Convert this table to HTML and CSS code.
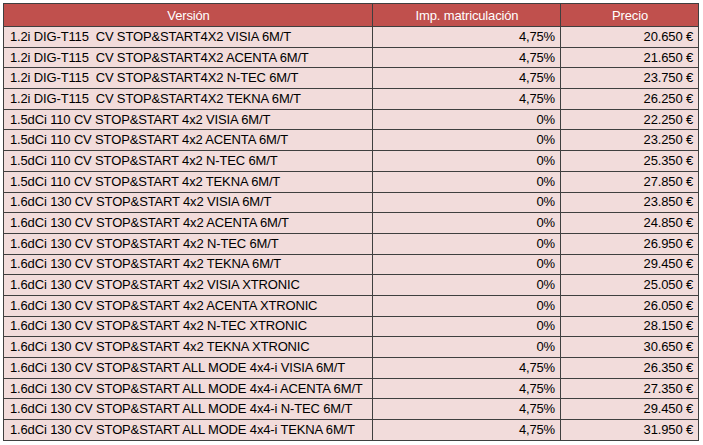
FILE: index.html
```html
<!DOCTYPE html>
<html lang="es">
<head>
<meta charset="utf-8">
<title>Precios</title>
<link rel="stylesheet" href="styles.css">
</head>
<body>
<table class="prices">
  <colgroup>
    <col class="c-version">
    <col class="c-imp">
    <col class="c-price">
  </colgroup>
  <thead>
    <tr><th>Versión</th><th>Imp. matriculación</th><th>Precio</th></tr>
  </thead>
  <tbody>
    <tr><td>1.2i DIG-T115&nbsp; CV STOP&amp;START4X2 VISIA 6M/T</td><td class="num">4,75%</td><td class="num">20.650 €</td></tr>
    <tr><td>1.2i DIG-T115&nbsp; CV STOP&amp;START4X2 ACENTA 6M/T</td><td class="num">4,75%</td><td class="num">21.650 €</td></tr>
    <tr><td>1.2i DIG-T115&nbsp; CV STOP&amp;START4X2 N-TEC 6M/T</td><td class="num">4,75%</td><td class="num">23.750 €</td></tr>
    <tr><td>1.2i DIG-T115&nbsp; CV STOP&amp;START4X2 TEKNA 6M/T</td><td class="num">4,75%</td><td class="num">26.250 €</td></tr>
    <tr><td>1.5dCi 110 CV STOP&amp;START 4x2 VISIA 6M/T</td><td class="num">0%</td><td class="num">22.250 €</td></tr>
    <tr><td>1.5dCi 110 CV STOP&amp;START 4x2 ACENTA 6M/T</td><td class="num">0%</td><td class="num">23.250 €</td></tr>
    <tr><td>1.5dCi 110 CV STOP&amp;START 4x2 N-TEC 6M/T</td><td class="num">0%</td><td class="num">25.350 €</td></tr>
    <tr><td>1.5dCi 110 CV STOP&amp;START 4x2 TEKNA 6M/T</td><td class="num">0%</td><td class="num">27.850 €</td></tr>
    <tr><td>1.6dCi 130 CV STOP&amp;START 4x2 VISIA 6M/T</td><td class="num">0%</td><td class="num">23.850 €</td></tr>
    <tr><td>1.6dCi 130 CV STOP&amp;START 4x2 ACENTA 6M/T</td><td class="num">0%</td><td class="num">24.850 €</td></tr>
    <tr><td>1.6dCi 130 CV STOP&amp;START 4x2 N-TEC 6M/T</td><td class="num">0%</td><td class="num">26.950 €</td></tr>
    <tr><td>1.6dCi 130 CV STOP&amp;START 4x2 TEKNA 6M/T</td><td class="num">0%</td><td class="num">29.450 €</td></tr>
    <tr><td>1.6dCi 130 CV STOP&amp;START 4x2 VISIA XTRONIC</td><td class="num">0%</td><td class="num">25.050 €</td></tr>
    <tr><td>1.6dCi 130 CV STOP&amp;START 4x2 ACENTA XTRONIC</td><td class="num">0%</td><td class="num">26.050 €</td></tr>
    <tr><td>1.6dCi 130 CV STOP&amp;START 4x2 N-TEC XTRONIC</td><td class="num">0%</td><td class="num">28.150 €</td></tr>
    <tr><td>1.6dCi 130 CV STOP&amp;START 4x2 TEKNA XTRONIC</td><td class="num">0%</td><td class="num">30.650 €</td></tr>
    <tr><td>1.6dCi 130 CV STOP&amp;START ALL MODE 4x4-i VISIA 6M/T</td><td class="num">4,75%</td><td class="num">26.350 €</td></tr>
    <tr><td>1.6dCi 130 CV STOP&amp;START ALL MODE 4x4-i ACENTA 6M/T</td><td class="num">4,75%</td><td class="num">27.350 €</td></tr>
    <tr><td>1.6dCi 130 CV STOP&amp;START ALL MODE 4x4-i N-TEC 6M/T</td><td class="num">4,75%</td><td class="num">29.450 €</td></tr>
    <tr><td>1.6dCi 130 CV STOP&amp;START ALL MODE 4x4-i TEKNA 6M/T</td><td class="num">4,75%</td><td class="num">31.950 €</td></tr>
  </tbody>
</table>
</body>
</html>
```

FILE: styles.css
```css
html, body {
  margin: 0;
  padding: 0;
  background: #ffffff;
}

body {
  padding: 3px 0 0 3px;
}

.prices {
  border-collapse: collapse;
  table-layout: fixed;
  width: 695px;
  font-family: "Liberation Sans", Arial, sans-serif;
  font-size: 13px;
  letter-spacing: -0.15px;
  color: #000000;
}

.c-version { width: 369px; }
.c-imp { width: 188px; }
.c-price { width: 138px; }

.prices th,
.prices td {
  border: 1px solid #3f3f3f;
  white-space: nowrap;
  overflow: hidden;
  padding: 0 5px 0 6px;
  line-height: 16px;
}

.prices th {
  background: #c0504d;
  color: #ffffff;
  font-weight: normal;
  text-align: center;
  height: 21px;
  padding-top: 1px;
}

.prices td {
  background: #f2dcdb;
  height: 19.7px;
  text-align: left;
}

.prices td.num {
  text-align: right;
}
```
